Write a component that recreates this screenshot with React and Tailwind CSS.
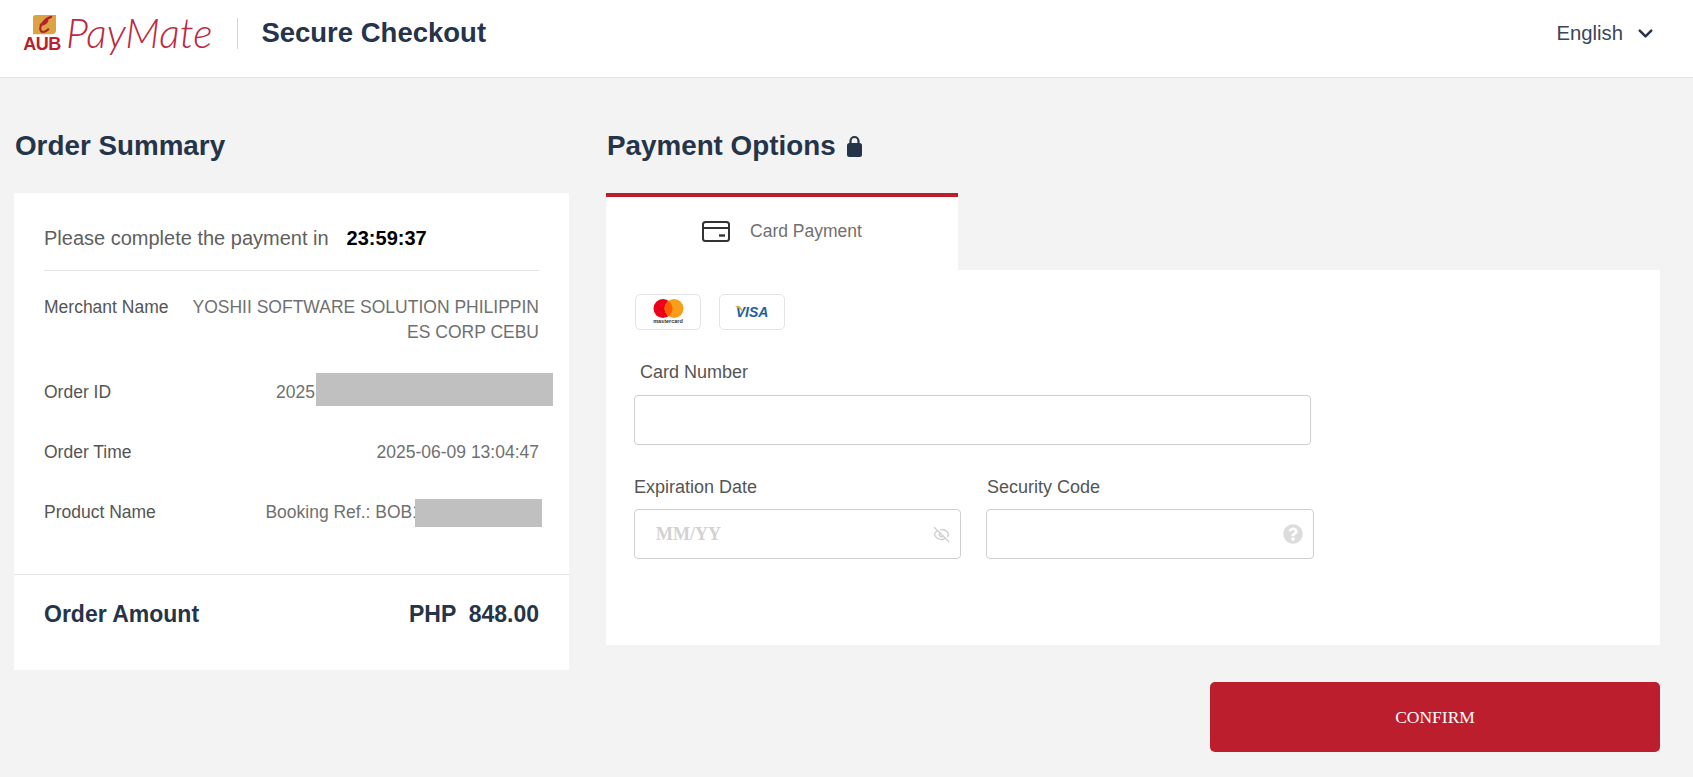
import React from "react";
import { ChevronDown, EyeOff } from "lucide-react";
import { FaQuestionCircle } from "react-icons/fa";

function Row({ label, children, className = "" }) {
  return (
    <div className={`relative flex justify-between ${className}`}>
      <span className="shrink-0 text-[#555]">{label}</span>
      {children}
    </div>
  );
}

export default function App() {
  return (
    <div className="h-[777px] overflow-hidden bg-[#f3f3f3] font-['Liberation_Sans',Arial,sans-serif]">
      <header className="flex h-[78px] items-center justify-between border-b border-[#e3e3e3] bg-white pr-[36px] pb-[11px] pl-[19px]">
        <div className="flex items-center">
          <div className="relative flex h-[44px] w-[46px] flex-col items-center justify-end pb-[2px]">
            <svg width="27" height="23" viewBox="0 0 28 24" className="absolute top-[3px] left-[12px]">
              <path d="M2 4 Q2 1 5 1 H26 V17 Q26 21 22 21 H2 Z" fill="#d9a441" />
              <path d="M21 3 C14 5 8 13 10 17 C11 20 15 19 18 16 M10 11 C13 11 16 9 17 7" fill="none" stroke="#b5202f" strokeWidth="2.2" strokeLinecap="round" />
            </svg>
            <span className="relative text-[18px] leading-[17px] font-bold tracking-[-0.5px] text-[#bc1e2d]">AUB</span>
          </div>
          <span className="ml-[1px] font-['Lato',sans-serif] text-[41px] leading-[44px] font-light text-[#bc2a3f] italic">PayMate</span>
          <div className="mr-[23px] ml-[25px] h-[31px] w-px bg-[#d4d4d4]" />
          <span className="text-[27.5px] font-bold text-[#253449]">Secure Checkout</span>
        </div>
        <div className="flex items-center text-[#3a4658]">
          <span className="text-[20.3px]">English</span>
          <ChevronDown className="ml-[11px]" size={23} strokeWidth={2.6} color="#253449" />
        </div>
      </header>

      <main className="flex pt-[47px] pl-[14px]">
        <section className="w-[555px] shrink-0">
          <h2 className="mb-[26px] h-[42px] pl-px text-[27.8px] leading-[42px] font-bold text-[#253449]">Order Summary</h2>
          <div className="h-[477px] bg-white">
            <div className="mx-[30px] flex h-[78px] items-center border-b border-[#e3e3e3] pt-[13px] text-[20px] text-[#606060]">
              <span>Please complete the payment in</span>
              <span className="ml-[18px] font-bold text-black">23:59:37</span>
            </div>
            <div className="flex h-[304px] flex-col border-b border-[#e3e3e3] px-[30px] pt-[24px] text-[17.5px] leading-[25px]">
              <Row label="Merchant Name" className="h-[85px]">
                <span className="w-[350px] text-right break-all text-[#707070]">YOSHII SOFTWARE SOLUTION PHILIPPINES CORP CEBU</span>
              </Row>
              <Row label="Order ID" className="h-[60px]">
                <span className="absolute top-0 right-[224px] text-[#707070]">2025</span>
                <span className="absolute top-[-7px] right-[-14px] h-[33px] w-[237px] bg-[#c0c0c0]" />
              </Row>
              <Row label="Order Time" className="h-[60px]">
                <span className="text-[#707070]">2025-06-09 13:04:47</span>
              </Row>
              <Row label="Product Name" className="h-[40px]">
                <span className="absolute top-0 right-[117px] text-[#707070]">Booking Ref.: BOB1</span>
                <span className="absolute top-[-1px] right-[-3px] h-[28px] w-[127px] bg-[#c0c0c0]" />
              </Row>
            </div>
            <div className="flex items-center justify-between px-[30px] pt-[24px] font-bold text-[#253449]">
              <span className="text-[23px] leading-[30px]">Order Amount</span>
              <span className="text-[23px] leading-[30px] whitespace-pre">PHP  848.00</span>
            </div>
          </div>
        </section>

        <section className="ml-[37px] w-[1054px] shrink-0">
          <h2 className="mb-[26px] flex h-[42px] items-center pl-px text-[27.8px] leading-[42px] font-bold text-[#253449]">
            Payment Options
            <svg width="17" height="23" viewBox="0 0 17 23" className="mt-[1px] ml-[10px]">
              <path d="M4.5 9V6a4 4 0 0 1 8 0v3" fill="none" stroke="#253449" strokeWidth="2.2" />
              <rect x="1" y="8" width="15" height="14" rx="2.5" fill="#253449" />
            </svg>
          </h2>
          <div className="flex h-[77px] w-[352px] items-center justify-center gap-[20px] border-t-4 border-[#bc1e2d] bg-white pb-[5px]">
            <svg width="28" height="21" viewBox="0 0 28 21" fill="none" stroke="#333" strokeWidth="2">
              <rect x="1" y="1" width="26" height="19" rx="2.5" />
              <path d="M1 7H27" />
              <path d="M17 14.5H23" strokeWidth="2.4" />
            </svg>
            <span className="text-[17.5px] text-[#707070]">Card Payment</span>
          </div>
          <div className="h-[375px] bg-white pt-[24px] pl-[28px]">
            <div className="ml-px flex gap-[18px]">
              <div className="flex h-[36px] w-[66px] flex-col items-center justify-center rounded-[5px] border border-[#e4e4e4]">
                <svg width="31" height="19" viewBox="0 0 31 19">
                  <circle cx="10" cy="9.5" r="9.5" fill="#eb001b" />
                  <circle cx="21" cy="9.5" r="9.5" fill="#f79e1b" />
                  <path d="M15.5 1.8a9.5 9.5 0 0 1 0 15.4a9.5 9.5 0 0 1 0-15.4" fill="#ff5f00" />
                </svg>
                <span className="text-[5.5px] leading-[7px] font-bold text-[#333]">mastercard</span>
              </div>
              <div className="relative flex h-[36px] w-[66px] items-center justify-center rounded-[5px] border border-[#e4e4e4]">
                <span className="text-[14px] leading-none font-bold text-[#1d5ea8] italic">VISA</span>
                <svg width="8" height="6" viewBox="0 0 8 6" className="absolute top-[11px] left-[15px]"><path d="M0 0H4C6 1 7 3 8 6C5 3 3 2 0 0" fill="#e5a33b" /></svg>
              </div>
            </div>
            <label className="mt-[29px] block h-[26px] pl-[6px] text-[18px] leading-[26px] text-[#555]">Card Number</label>
            <div className="mt-[10px] h-[50px] w-[677px] rounded-[4px] border border-[#cfcfcf]" />
            <div className="mt-[29px] flex gap-[25px]">
              <div>
                <label className="block h-[26px] text-[18px] leading-[26px] text-[#555]">Expiration Date</label>
                <div className="mt-[9px] flex h-[50px] w-[327px] items-center justify-between rounded-[4px] border border-[#cfcfcf] pr-[10px] pl-[21px]">
                  <span className="font-['Liberation_Serif',serif] text-[18px] font-bold text-[#d2d2d2]">MM/YY</span>
                  <EyeOff size={17} color="#d0d0d0" />
                </div>
              </div>
              <div>
                <label className="block h-[26px] pl-px text-[18px] leading-[26px] text-[#555]">Security Code</label>
                <div className="mt-[9px] flex h-[50px] w-[328px] items-center justify-end rounded-[4px] border border-[#cfcfcf] pr-[10px]">
                  <FaQuestionCircle size={20} color="#dcdcdc" />
                </div>
              </div>
            </div>
          </div>
          <div className="mt-[37px] flex justify-end">
            <button className="h-[70px] w-[450px] rounded-[5px] bg-[#bc1e2d] font-['Liberation_Serif',serif] text-[17.5px] text-white">CONFIRM</button>
          </div>
        </section>
      </main>
    </div>
  );
}
